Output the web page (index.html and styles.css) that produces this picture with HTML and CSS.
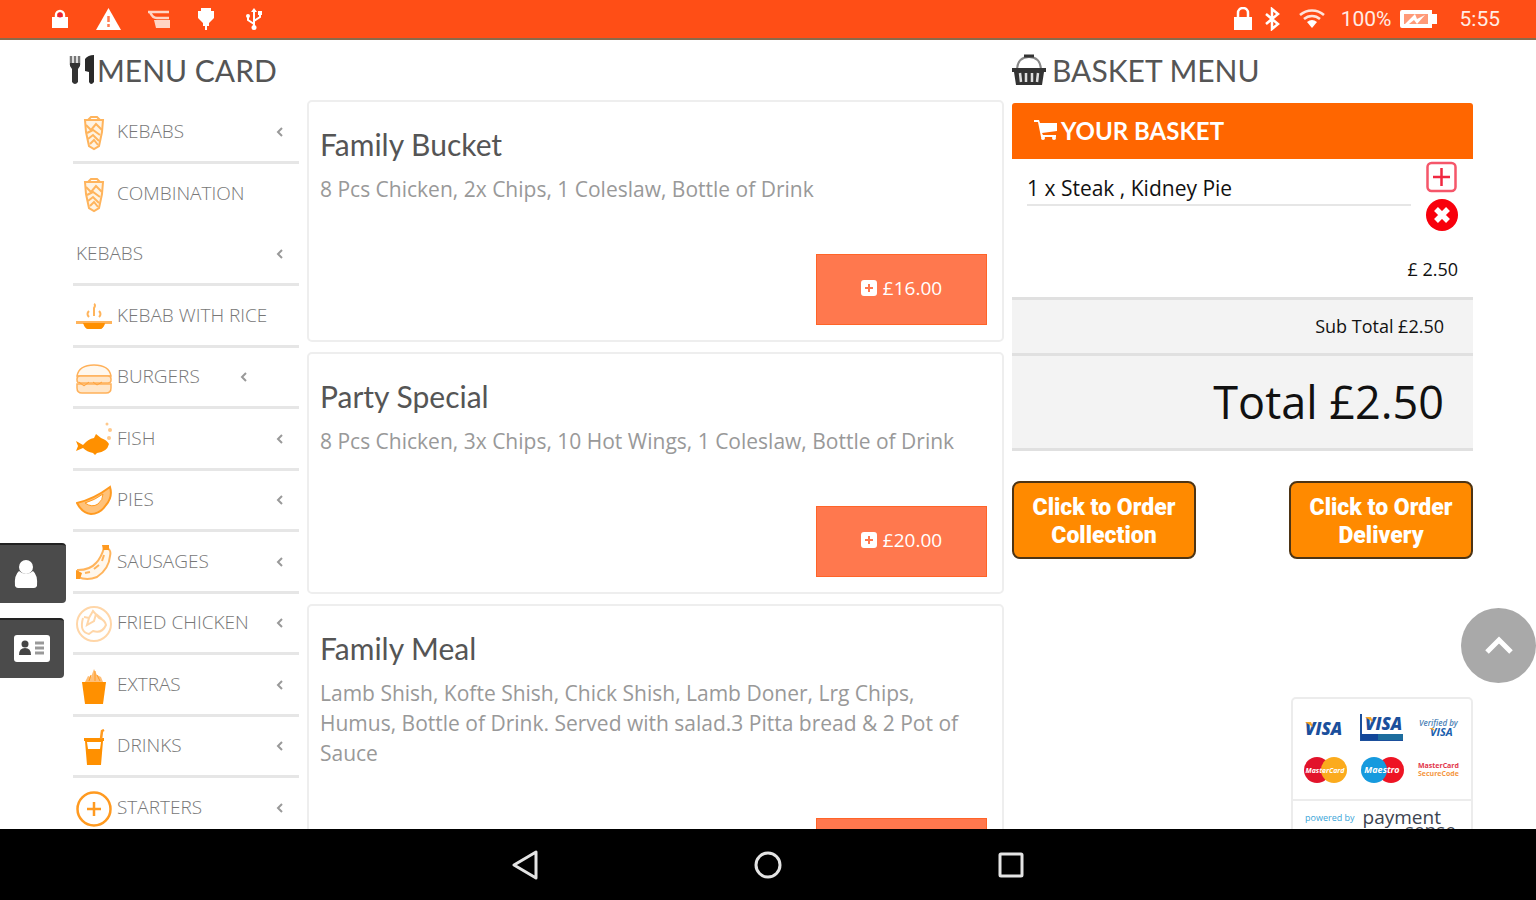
FILE: index.html
```html
<!DOCTYPE html>
<html lang="en">

<head>
  <meta charset="utf-8">
  <meta name="viewport" content="width=device-width, initial-scale=1">
  <title>Menu Card</title>
  <link rel="stylesheet" href="styles.css">
</head>

<body>
  <!-- shared icons -->
  <svg width="0" height="0" class="sprite">
    <symbol id="arrow" viewBox="0 0 8 12"><path d="M6 2 2 6l4 4" fill="none" stroke="#999" stroke-width="2"/></symbol>
    <symbol id="kebab" viewBox="0 0 36 36">
      <g fill="none" stroke="#ffb45c" stroke-width="2">
        <path d="M9 5h18l-1 12-3 14-5 3-5-3-3-14z" fill="#fff3e2"/>
        <path d="M12 5l3-3h6l3 3M10 10l5 5 5-6 6 6M11 18l6-3 7 5M12 24l5-4 6 6M14 29l4-4 4 5"/>
      </g>
    </symbol>
    <symbol id="plus-square" viewBox="0 0 16 16">
      <path fill="#fff" fill-rule="evenodd" d="M3 0h10a3 3 0 0 1 3 3v10a3 3 0 0 1-3 3H3a3 3 0 0 1-3-3V3a3 3 0 0 1 3-3zm4 4v3H4v2h3v3h2V9h3V7H9V4z"/>
    </symbol>
  </svg>

  <header class="status-bar">
    <div class="status-left">
      <svg width="18" height="20" viewBox="0 0 18 20"><path d="M5 9V6a4 4 0 0 1 8 0v3" fill="none" stroke="#fff" stroke-width="2.4"/><path d="M1 8h16v11H1z" fill="#fff"/><circle cx="9" cy="6" r="2.5" fill="#e8203a"/></svg>
      <svg width="25" height="22" viewBox="0 0 25 22"><path d="M12.500 0 25 22H0z" fill="#fff"/><path d="M12.500 8v6M12.500 16v3" stroke="#ff7a50" stroke-width="2.500"/></svg>
      <svg width="22" height="20" viewBox="0 0 22 20"><path d="M0 3h21M2 3c2 5 4 6 7 6h12" stroke="#ffd5c5" stroke-width="2.500" fill="none"/><path d="M6 11h16v8H8z" fill="#ffd5c5"/></svg>
      <svg width="18" height="22" viewBox="0 0 18 22"><path d="M4 0h10v3h3v7l-5 5v3h-2v4H8v-4H6v-3l-5-5V3h3z" fill="#fff"/></svg>
      <svg width="24" height="22" viewBox="-3 0 24 22"><path d="M9 3v17M9 16l-6-4V8M9 13l6-4V5" stroke="#fff" stroke-width="2" fill="none"/><path d="M9 0l3 4H6z" fill="#fff"/><circle cx="9" cy="19.500" r="2.500" fill="#fff"/><circle cx="3" cy="8" r="2" fill="#fff"/><path d="M13 3h4v4h-4z" fill="#fff"/></svg>
    </div>
    <div class="status-right">
      <svg width="20" height="24" viewBox="0 0 20 24"><path d="M5 11V6a5 5 0 0 1 10 0v5" fill="none" stroke="#fff" stroke-width="2.500"/><path d="M1 10h18v13H1z" fill="#fff"/></svg>
      <svg width="22" height="24" viewBox="-3 0 22 24"><path d="M2 7l12 10-6 5V2l6 5L2 17" fill="none" stroke="#fff" stroke-width="2.500"/></svg>
      <svg class="wifi" width="26" height="20" viewBox="0 0 26 20"><path d="M1 6a18 18 0 0 1 24 0M5 10a12 12 0 0 1 16 0" fill="none" stroke="#ffe4da" stroke-width="2.500"/><path d="M8 13a8 8 0 0 1 10 0l-5 6z" fill="#fff"/></svg>
      <span>100%</span>
      <svg width="38" height="18" viewBox="0 0 38 18"><path d="M2 0h30v4h5v10h-5v4H2a2 2 0 0 1-2-2V2a2 2 0 0 1 2-2z" fill="#fff"/><path d="M4 4h24v10H4z" fill="#ff9a78"/><path d="M5 14 15 4l2 5 8-4-8 9-3-4-5 4z" fill="#fff"/></svg>
      <span class="clock">5:55</span>
    </div>
  </header>

  <main class="page">
    <nav class="menu">
      <h2>
        <svg class="cutlery" width="24" height="32" viewBox="0 0 24 32">
          <path d="M-2 2v9M2 2v9M6 2v9" stroke="#777" stroke-width="2.500"/>
          <path d="M-3 9H7v3l-2 3v13q-3 4-6 0V15l-2-3z" fill="#333"/>
          <path d="M12 17V5q3-4 9-4v27q-3 4-5 0V18z" fill="#2a2a2a"/>
        </svg>MENU CARD
      </h2>
      <ul>
        <li><a href="#"><span class="name"><svg class="icon"><use href="#kebab"/></svg>KEBABS</span><svg class="arrow"><use href="#arrow"/></svg></a></li>
        <li class="two-lines"><a href="#"><span class="name"><svg class="icon"><use href="#kebab"/></svg>COMBINATION KEBABS</span><svg class="arrow"><use href="#arrow"/></svg></a></li>
        <li><a href="#"><span class="name"><svg class="icon" viewBox="0 0 36 36"><path d="M0 22h36v3h-7q-2 5-5 5H13q-3 0-5-5H0z" fill="#ffb45c"/><path d="M7 24h22q-2 6-5 6H12q-3 0-5-6z" fill="#ff9000"/><path d="M13 18q-3-3 0-6M18 17V9q2-3 0-4M23 18q3-3 0-6" fill="none" stroke="#ffb45c" stroke-width="2"/></svg>KEBAB WITH RICE</span></a></li>
        <li><a href="#"><span class="name"><svg class="icon" viewBox="0 0 36 36"><g fill="#ffe6c8" stroke="#ffb15a" stroke-width="1.500"><path d="M1 16Q3 5 18 5t17 11z" fill="#fff8ee"/><rect x="1" y="16" width="34" height="7" rx="3"/><path d="M1 24h34v4q0 5-5 5H6q-5 0-5-5z"/></g><path d="M3 22l5 4 5-4M17 22l4 3 5-3" fill="none" stroke="#ffa23a"/></svg>BURGERS</span><svg class="arrow inset"><use href="#arrow"/></svg></a></li>
        <li><a href="#"><span class="name"><svg class="icon" viewBox="0 0 36 36"><path d="M0 19l7 4q5-6 11-7l2-4 5 4q6 2 8 6-2 8-12 9l-2 2-2-2q-6-1-10-5l-7 3 2-5z" fill="#ff9000"/><g fill="#ffc98c"><circle cx="33" cy="16" r="2"/><circle cx="34" cy="8" r="2"/><circle cx="31" cy="2" r="1.500"/></g></svg>FISH</span><svg class="arrow"><use href="#arrow"/></svg></a></li>
        <li><a href="#"><span class="name"><svg class="icon" viewBox="0 0 36 36"><path d="M1 20Q18 16 34 4q3 10-4 18-6 9-15 9-9-1-14-11z" fill="#ffc27a" stroke="#ff9a20" stroke-width="2"/><path d="M9 20q10-3 18-9 0 6-5 10-6 4-13-1z" fill="#fff" stroke="#ff9a20"/></svg>PIES</span><svg class="arrow"><use href="#arrow"/></svg></a></li>
        <li><a href="#"><span class="name"><svg class="icon" viewBox="0 0 36 36"><path d="M28 3q8 0 6 8-1 13-13 21-10 4-19 0v-7q12 0 18-7 5-5 8-15z" fill="#fff7ec" stroke="#ffb45c" stroke-width="2"/><path d="M26 0h7v5h-6zM0 25l6 3-2 6H0z" fill="#ff9a20"/><path d="M28 10l-2 6M23 20l-5 4M14 27l-5 1" stroke="#ffb45c" stroke-width="2"/></svg>SAUSAGES</span><svg class="arrow"><use href="#arrow"/></svg></a></li>
        <li><a href="#"><span class="name"><svg class="icon" viewBox="0 0 36 36"><g fill="none" stroke="#ffd6a8" stroke-width="2"><circle cx="18" cy="18" r="17"/><path d="M7 12q-4 14 6 16l4-3q9 3 13-6-1-5-7-7l-6-7-4 7-5-1M13 12l-2 7 7-4 2-7M20 8l6 5"/></g></svg>FRIED CHICKEN</span><svg class="arrow"><use href="#arrow"/></svg></a></li>
        <li><a href="#"><span class="name"><svg class="icon" viewBox="0 0 36 36"><path d="M6 14h24l-3 22H9z" fill="#ff9000"/><path d="M9 14l3-6 3 1 3-8 3 6 4 2 2 5z" fill="#ffbf78"/><path d="M13 13l2-6M19 13V3M24 13l-3-6" stroke="#ff9a20"/></svg>EXTRAS</span><svg class="arrow"><use href="#arrow"/></svg></a></li>
        <li><a href="#"><span class="name"><svg class="icon" viewBox="0 0 36 36"><path d="M8 9h20v3h-1l-2 24H11L9 12H8zm3 4l1 7h12l1-7z" fill="#ff9000" fill-rule="evenodd"/><path d="M25 10l1-8 2-1" fill="none" stroke="#ff9a20" stroke-width="2.500"/></svg>DRINKS</span><svg class="arrow"><use href="#arrow"/></svg></a></li>
        <li><a href="#"><span class="name"><svg class="icon" viewBox="0 0 36 36"><circle cx="18" cy="18" r="16.500" fill="none" stroke="#ff9a20" stroke-width="2.500"/><path d="M18 11v14M11 18h14" stroke="#ff9a20" stroke-width="2.500"/></svg>STARTERS</span><svg class="arrow"><use href="#arrow"/></svg></a></li>
      </ul>
    </nav>

    <section class="cards">
      <article class="card">
        <h3>Family Bucket</h3>
        <p>8 Pcs Chicken, 2x Chips, 1 Coleslaw, Bottle of Drink</p>
        <button type="button" class="price"><svg width="16" height="16"><use href="#plus-square"/></svg>£16.00</button>
      </article>
      <article class="card">
        <h3>Party Special</h3>
        <p>8 Pcs Chicken, 3x Chips, 10 Hot Wings, 1 Coleslaw, Bottle of Drink</p>
        <button type="button" class="price"><svg width="16" height="16"><use href="#plus-square"/></svg>£20.00</button>
      </article>
      <article class="card">
        <h3>Family Meal</h3>
        <p>Lamb Shish, Kofte Shish, Chick Shish, Lamb Doner, Lrg Chips, Humus, Bottle of Drink. Served with salad.3 Pitta bread &amp; 2 Pot of Sauce</p>
        <button type="button" class="price" aria-label="Add Family Meal"></button>
      </article>
    </section>

    <aside class="basket">
      <h2>
        <svg class="basket-icon" width="34" height="32" viewBox="0 0 34 32">
          <path d="M5 15Q6 3 17 3t12 12" fill="none" stroke="#888" stroke-width="2"/>
          <path d="M12 2h10" stroke="#333" stroke-width="3"/>
          <path d="M0 14h34v4h-2l-2 13H4L2 18H0z" fill="#333"/>
          <path d="M8 19l1 9M14 19v9M20 19v9M26 19l-1 9" stroke="#ddd" stroke-width="2.500"/>
        </svg>BASKET MENU
      </h2>
      <h4>
        <svg width="24" height="20" viewBox="0 0 24 20"><path d="M0 0h5l1 3h17v8L8 13l1 2h13v2H7L4 2H0z" fill="#fff"/><circle cx="9" cy="18" r="2" fill="#fff"/><circle cx="20" cy="18" r="2" fill="#fff"/></svg>YOUR BASKET
      </h4>
      <div class="order">
        <div class="order-line">
          <span>1 x Steak , Kidney Pie</span>
          <div class="order-actions">
            <button type="button" aria-label="Add one"><svg width="32" height="32" viewBox="0 0 32 32"><rect x="1.500" y="2" width="28" height="28" rx="4" fill="#fff" stroke="#f5566a" stroke-width="2.500"/><path d="M15.500 7v18M7 16h17" stroke="#f02840" stroke-width="2.500"/></svg></button>
            <button type="button" aria-label="Remove"><svg width="32" height="32" viewBox="0 0 32 32"><circle cx="16" cy="16" r="16" fill="#f8000c"/><path d="M10 10l12 12M22 10 10 22" stroke="#fff" stroke-width="5.500"/></svg></button>
          </div>
        </div>
        <div class="line-price">£ 2.50</div>
      </div>
      <div class="sub-total">Sub Total £2.50</div>
      <div class="total">Total £2.50</div>
      <div class="checkout">
        <button type="button">Click to Order<br>Collection</button>
        <button type="button">Click to Order<br>Delivery</button>
      </div>
      <div class="payments">
        <div class="logos">
          <svg viewBox="0 0 44 28"><text x="2" y="21" class="visa" fill="#1b4f9c">VISA</text><path d="M2 8h6l2 5z" fill="#f5a623"/></svg>
          <svg viewBox="0 0 44 28"><path d="M1 0v26h42" fill="none" stroke="#1b4f9c" stroke-width="2"/><path d="M1 20h42v6H1z" fill="#12479a"/><path d="M18 20h25v6H18z" fill="#1d6d9e"/><text x="5" y="16" class="visa" fill="#1b4f9c">VISA</text><path d="M5 3h6l2 5z" fill="#f5a623"/></svg>
          <svg viewBox="0 0 44 28"><text x="2" y="12" class="verified" fill="#4a7fb5">Verified by</text><text x="13" y="22" class="visa-small" fill="#1b5fae">VISA</text><path d="M12 14h4l2 3z" fill="#f5a623"/></svg>
          <svg viewBox="0 0 44 28"><circle cx="14" cy="14" r="13" fill="#e2132b"/><circle cx="31" cy="14" r="13" fill="#fbab1d"/><text x="22" y="17" text-anchor="middle" class="card-name" fill="#fff">MasterCard</text></svg>
          <svg viewBox="0 0 44 28"><circle cx="31" cy="14" r="13" fill="#ee1424"/><circle cx="14" cy="14" r="13" fill="#169ade"/><text x="22" y="17" text-anchor="middle" class="card-name maestro" fill="#fff">Maestro</text></svg>
          <svg viewBox="0 0 44 28"><text x="1" y="12" class="secure" fill="#e2364a">MasterCard</text><text x="1" y="20" class="secure" fill="#f5973f">SecureCode</text></svg>
        </div>
        <div class="powered"><small>powered by</small><strong>payment<span>sense</span></strong></div>
      </div>
    </aside>
  </main>

  <div class="side-tabs">
    <button type="button" aria-label="Account"><svg width="24" height="30" viewBox="0 0 24 30"><circle cx="12" cy="8" r="7" fill="#fff"/><path d="M5 12q7 6 14 0 5 4 4 15-1 2-3 2H4q-2 0-3-2-1-11 4-15z" fill="#fff"/></svg></button>
    <button type="button" aria-label="Contact"><svg width="36" height="28" viewBox="0 0 36 28"><rect width="36" height="27" rx="3" fill="#fff"/><circle cx="11" cy="9" r="3.500" fill="#444"/><path d="M5 20q0-7 6-7t6 7z" fill="#444"/><path d="M21 8h9M21 13h9M21 18h9" stroke="#999" stroke-width="3"/></svg></button>
  </div>
  <button type="button" class="to-top" aria-label="Back to top"><svg width="32" height="20" viewBox="0 0 32 20"><path d="M4 16 16 4l12 12" fill="none" stroke="#fff" stroke-width="5"/></svg></button>

  <footer class="nav-bar">
    <button type="button" aria-label="Back"><svg width="28" height="30" viewBox="0 0 28 30"><path d="M25 2v26L3 15z" fill="none" stroke="#e4e4e4" stroke-width="3" stroke-linejoin="round"/></svg></button>
    <button type="button" aria-label="Home"><svg width="28" height="28" viewBox="0 0 28 28"><circle cx="14" cy="14" r="12" fill="none" stroke="#e4e4e4" stroke-width="3"/></svg></button>
    <button type="button" aria-label="Recent"><svg width="28" height="28" viewBox="0 0 28 28"><rect x="3" y="3" width="22" height="22" rx="1" fill="none" stroke="#e4e4e4" stroke-width="3"/></svg></button>
  </footer>
</body>

</html>
```
FILE: styles.css
```css
* {
  box-sizing: border-box;
}

body {
  margin: 0;
  height: 100vh;
  display: flex;
  flex-direction: column;
  overflow: hidden;
  background: #fff;
  color: #111;
  font-family: "Open Sans", "Noto Sans", sans-serif;
  font-size: 21px;
}

h2, h3, h4, p, ul {
  margin: 0;
  padding: 0;
}

button {
  border: none;
  padding: 0;
  background: none;
  font-family: inherit;
  cursor: pointer;
}

svg {
  flex: none;
}

.sprite {
  position: absolute;
}

/* status bar */
.status-bar {
  flex: none;
  height: 40px;
  border-bottom: 2px solid #8a6a4c;
  background: #ff4e16;
  display: flex;
  justify-content: space-between;
  padding: 0 36px 0 51px;
  color: #ffece4;
  font-family: Roboto, sans-serif;
}

.status-left,
.status-right {
  display: flex;
  align-items: center;
}

.status-left {
  gap: 27px;
}

.status-right {
  gap: 8px;
}

.wifi {
  margin: 0 8px;
}

.clock {
  margin-left: 14px;
}

/* page columns */
.page {
  flex: 1;
  min-height: 0;
  overflow: hidden;
  display: grid;
  grid-template-columns: 226fr 697fr 461fr;
  gap: 8px;
  padding: 0 63px 0 73px;
}

h2 {
  display: flex;
  align-items: center;
  height: 60px;
  color: #555;
  font-family: Lato, sans-serif;
  font-size: 30px;
  font-weight: 400;
  white-space: nowrap;
}

.cutlery {
  overflow: visible;
}

.basket-icon {
  margin-right: 6px;
}

/* menu list */
.menu ul {
  list-style: none;
  padding-top: 2px;
}

.menu li {
  border-bottom: 3px solid #e6e6e6;
}

.menu a {
  display: flex;
  align-items: flex-end;
  height: 58px;
  padding: 0 15px 0 3px;
  color: #777;
  font-size: 19px;
  font-weight: 300;
  line-height: 60px;
  text-decoration: none;
}

.menu li:nth-child(odd) a {
  height: 59px;
}

.menu .two-lines a {
  height: 119px;
}

.name {
  flex: 1;
}

.icon {
  width: 36px;
  height: 36px;
  margin-right: 5px;
  vertical-align: middle;
}

.arrow {
  width: 8px;
  height: 12px;
  margin-bottom: 23px;
}

.arrow.inset {
  margin-right: 36px;
}

/* meal cards */
.cards {
  display: flex;
  flex-direction: column;
  gap: 10px;
  padding-top: 60px;
}

.card {
  flex: none;
  display: flex;
  flex-direction: column;
  padding: 25px 15px 15px 11px;
  border: 2px solid #eee;
  border-radius: 5px;
}

.card h3 {
  margin-bottom: 13px;
  color: #555;
  font-family: Lato, sans-serif;
  font-size: 30px;
  font-weight: 400;
  line-height: 34px;
}

.card p {
  margin-bottom: 50px;
  color: #999;
  line-height: 30px;
}

.price {
  display: flex;
  align-items: center;
  justify-content: center;
  align-self: flex-end;
  gap: 6px;
  width: 171px;
  height: 71px;
  padding-bottom: 4px;
  border: 1px solid #ff6428;
  background: #ff784e;
  color: #fff;
  font-size: 19px;
}

/* basket */
.basket h4 {
  display: flex;
  align-items: center;
  gap: 3px;
  height: 56px;
  margin-top: 3px;
  padding: 0 0 2px 22px;
  border-radius: 3px 3px 0 0;
  background: #ff6600;
  color: #fff;
  font-family: Lato, sans-serif;
  font-size: 24px;
  font-weight: 700;
}

.order {
  padding: 2px 15px 13px;
}

.order-line {
  display: flex;
  gap: 15px;
  align-items: flex-start;
}

.order-line span {
  flex: 1;
  padding-top: 11px;
  border-bottom: 2px solid #e6e6e6;
  line-height: 32px;
}

.order-actions {
  display: flex;
  flex-direction: column;
  gap: 6px;
}

.order-actions svg {
  display: block;
}

.line-price {
  margin-top: 23px;
  font-size: 18px;
  line-height: 30px;
  text-align: right;
}

.sub-total,
.total {
  padding-right: 29px;
  border-top: 3px solid #e0e0e0;
  background: #f3f3f3;
  text-align: right;
}

.sub-total {
  font-size: 18px;
  line-height: 53px;
}

.total {
  border-bottom: 3px solid #e0e0e0;
  font-size: 45px;
  line-height: 92px;
}

.checkout {
  display: flex;
  justify-content: space-between;
  margin-top: 30px;
}

.checkout button {
  width: 184px;
  height: 78px;
  padding-top: 4px;
  border: 2px solid #4d3414;
  border-radius: 8px;
  background: #ff8a00;
  color: #fff;
  font-family: Roboto, sans-serif;
  font-size: 23px;
  font-weight: 900;
  line-height: 28px;
}

.payments {
  width: 182px;
  margin-top: 138px;
  margin-left: auto;
  border: 2px solid #ececec;
  border-radius: 5px;
}

.logos {
  display: grid;
  grid-template-columns: repeat(3, 44px);
  justify-content: space-between;
  row-gap: 14px;
  padding: 15px 10px;
}

.logos svg {
  width: 44px;
  height: 28px;
}

.visa {
  font: italic 800 17px "Open Sans", sans-serif;
}

.visa-small {
  font: italic 700 11px "Open Sans", sans-serif;
}

.verified {
  font: italic 600 8px "Open Sans", sans-serif;
}

.card-name {
  font: italic 700 7px "Open Sans", sans-serif;
}

.maestro {
  font-size: 9px;
}

.secure {
  font: 700 7px "Open Sans", sans-serif;
}

.powered {
  display: flex;
  gap: 8px;
  padding: 10px 15px 20px 12px;
  border-top: 2px solid #ececec;
}

.powered small {
  color: #3aa5d8;
  font-size: 9px;
  line-height: 13px;
  white-space: nowrap;
}

.powered strong {
  flex: 1;
  color: #3c4450;
  font-size: 19px;
  font-weight: 400;
  line-height: 13px;
}

.powered strong span {
  display: block;
  text-align: right;
}

/* things that float over the page */
.side-tabs {
  position: fixed;
  left: 0;
  top: 543px;
  display: flex;
  flex-direction: column;
  align-items: flex-start;
  gap: 15px;
}

.side-tabs button {
  display: flex;
  align-items: center;
  justify-content: flex-end;
  height: 60px;
  padding: 0 14px;
  border-top: 2px solid #222;
  border-radius: 0 4px 4px 0;
  background: #4b4b4b;
}

.side-tabs button:first-child {
  padding-right: 28px;
}

.to-top {
  position: fixed;
  right: 0;
  bottom: 217px;
  display: flex;
  align-items: center;
  justify-content: center;
  width: 75px;
  height: 75px;
  border-radius: 50%;
  background: #a9a9a9;
}

/* bottom bar */
.nav-bar {
  flex: none;
  display: flex;
  align-items: center;
  justify-content: center;
  gap: 215px;
  height: 71px;
  background: #000;
}

.nav-bar svg {
  display: block;
}
```
